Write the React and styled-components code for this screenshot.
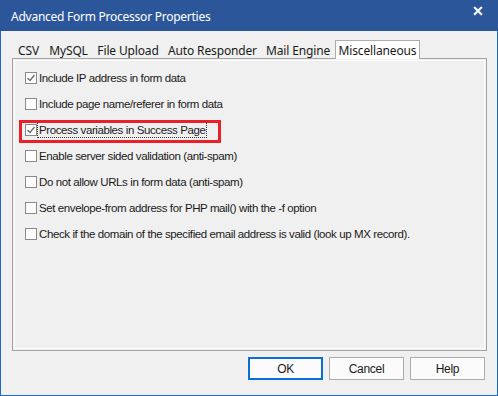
import React from "react";
import styled, { createGlobalStyle } from "styled-components";

const Global = createGlobalStyle`
  html, body { margin: 0; padding: 0; background: #f0f0f0; }
  * { box-sizing: border-box; }
`;

const Window = styled.div`
  width: 498px;
  height: 396px;
  background: #f0f0f0;
  border: 1px solid #1b6ad0;
  border-top: none;
  display: flex;
  flex-direction: column;
  font-family: "Liberation Sans", Arial, sans-serif;
`;

const TitleBar = styled.div`
  height: 31px;
  background: #2b579a;
  color: #fff;
  display: flex;
  align-items: center;
  justify-content: space-between;
  padding: 2px 14px 0 11px;
  margin: 0 -1px;
  font-family: "Noto Sans", "Open Sans", sans-serif;
  font-size: 12px;
  letter-spacing: -0.25px;
`;

const Close = styled.span`
  font-size: 14px;
  line-height: 1;
  margin-top: -12px;
  font-weight: 700;
`;

const Body = styled.div`
  flex: 1;
  display: flex;
  flex-direction: column;
  padding: 9px 10px 0 11px;
`;

const TabRow = styled.div`
  display: flex;
  align-items: flex-end;
  height: 19px;
  margin-bottom: -1px;
  position: relative;
  z-index: 1;
`;

const Tab = styled.div`
  width: ${(p) => p.$w}px;
  height: ${(p) => (p.$active ? 19 : 17)}px;
  display: flex;
  align-items: center;
  justify-content: center;
  font-family: "Noto Sans", "Open Sans", sans-serif;
  font-size: 12px;
  letter-spacing: -0.15px;
  color: #1a1a1a;
  background: ${(p) => (p.$active ? "#fff" : "transparent")};
  border: ${(p) => (p.$active ? "1px solid #adadad" : "none")};
  border-bottom: none;
  padding-top: ${(p) => (p.$active ? 1 : 0)}px;
`;

const Panel = styled.div`
  position: relative;
  width: 475px;
  height: 293px;
  border: 1px solid #a3a3a3;
  box-shadow: inset 0 0 0 1px #f0f0f0, inset 0 0 0 2px #fff;
  padding: 13px 0 0 12px;
  display: flex;
  flex-direction: column;
  gap: 14px;
`;

const Row = styled.label`
  display: flex;
  align-items: center;
  height: 12px;
  font-size: 11.5px;
  color: #1a1a1a;
  letter-spacing: -0.4px;
`;

const Box = styled.span`
  width: 12px;
  height: 12px;
  border: 1px solid #8a8a8a;
  background: #fff;
  display: flex;
  align-items: center;
  justify-content: center;
  flex: none;
`;

const Label = styled.span`
  padding: 1px 1px;
  border: 1px dotted ${(p) => (p.$focus ? "#333" : "transparent")};
  white-space: nowrap;
`;

const Highlight = styled.div`
  position: absolute;
  left: 6px;
  top: 61px;
  width: 202px;
  height: 23px;
  border: 3px solid #e8202a;
  pointer-events: none;
`;

const Buttons = styled.div`
  display: flex;
  justify-content: flex-end;
  gap: 6px;
  padding: 6px 2px 0 0;
`;

const Button = styled.button`
  width: 75px;
  height: 23px;
  background: #fbfbfb;
  border: 1px solid ${(p) => (p.$primary ? "#0a6fd2" : "#adadad")};
  box-shadow: ${(p) => (p.$primary ? "inset 0 0 0 1px #0a6fd2" : "none")};
  font-family: "Liberation Sans", Arial, sans-serif;
  font-size: 12px;
  letter-spacing: -0.3px;
  color: #1a1a1a;
  padding: 0;
  margin: 0;
`;

const Check = () => (
  <svg width="10" height="10" viewBox="0 0 10 10">
    <path d="M1.5 5 L4 7.5 L8.5 2" fill="none" stroke="#6a6a6a" strokeWidth="1.3" />
  </svg>
);

const tabs = [
  ["CSV", 33],
  ["MySQL", 47],
  ["File Upload", 72],
  ["Auto Responder", 97],
  ["Mail Engine", 74],
  ["Miscellaneous", 85, true],
];

const items = [
  ["Include IP address in form data", true],
  ["Include page name/referer in form data", false],
  ["Process variables in Success Page", true, true],
  ["Enable server sided validation (anti-spam)", false],
  ["Do not allow URLs in form data (anti-spam)", false],
  ["Set envelope-from address for PHP mail() with the -f option", false],
  ["Check if the domain of the specified email address is valid (look up MX record).", false],
];

export default function App() {
  return (
    <>
      <Global />
      <Window>
        <TitleBar>
          <span>Advanced Form Processor Properties</span>
          <Close>✕</Close>
        </TitleBar>
        <Body>
          <TabRow>
            {tabs.map(([t, w, a]) => (
              <Tab key={t} $w={w} $active={a}>
                {t}
              </Tab>
            ))}
          </TabRow>
          <Panel>
            {items.map(([t, c, f]) => (
              <Row key={t}>
                <Box>{c && <Check />}</Box>
                <Label $focus={f}>{t}</Label>
              </Row>
            ))}
            <Highlight />
          </Panel>
          <Buttons>
            <Button $primary>OK</Button>
            <Button>Cancel</Button>
            <Button>Help</Button>
          </Buttons>
        </Body>
      </Window>
    </>
  );
}
